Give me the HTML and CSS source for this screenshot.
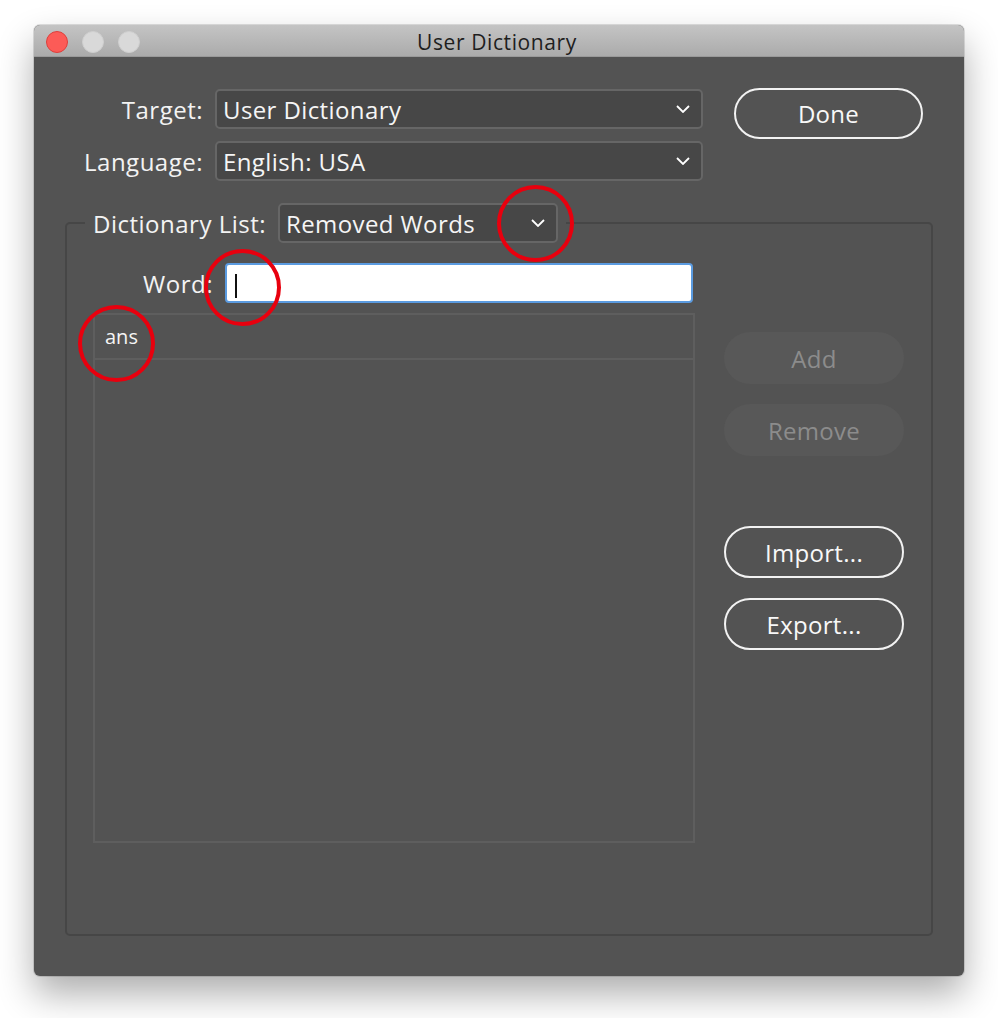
FILE: index.html
```html
<!DOCTYPE html>
<html lang="en">
<head>
<meta charset="utf-8">
<title>User Dictionary</title>
<link rel="stylesheet" href="styles.css">
</head>
<body>
<div class="window">
  <div class="titlebar">
    <div class="lights">
      <span class="light red"></span>
      <span class="light gray"></span>
      <span class="light gray"></span>
    </div>
    <div class="title">User Dictionary</div>
    <div></div>
  </div>
  <div class="content">
    <div class="top">
      <div class="fields">
        <div class="field">
          <span class="lbl lbl-top">Target:</span>
          <div class="select select-wide">
            <span class="select-text">User Dictionary</span>
            <svg class="chev" width="14" height="8" viewBox="0 0 14 8"><polyline points="1,1 7,7 13,1" fill="none" stroke="#fff" stroke-width="1.8"/></svg>
          </div>
        </div>
        <div class="field">
          <span class="lbl lbl-top">Language:</span>
          <div class="select select-wide">
            <span class="select-text">English: USA</span>
            <svg class="chev" width="14" height="8" viewBox="0 0 14 8"><polyline points="1,1 7,7 13,1" fill="none" stroke="#fff" stroke-width="1.8"/></svg>
          </div>
        </div>
      </div>
      <button class="btn btn-outline btn-done">Done</button>
    </div>

    <fieldset class="group">
      <legend class="legend">
        <div class="legend-inner">
          <span class="lbl">Dictionary List:</span>
          <div class="select select-short">
            <span class="select-text">Removed Words</span>
            <svg class="chev" width="14" height="8" viewBox="0 0 14 8"><polyline points="1,1 7,7 13,1" fill="none" stroke="#fff" stroke-width="1.8"/></svg>
          </div>
        </div>
      </legend>
      <div class="group-inner">
        <div class="left">
          <div class="word-row">
            <span class="lbl">Word:</span>
            <div class="input"><span class="caret"></span></div>
          </div>
          <div class="list">
            <div class="list-row">ans</div>
          </div>
        </div>
        <div class="actions">
          <button class="btn btn-disabled" disabled>Add</button>
          <button class="btn btn-disabled" disabled>Remove</button>
          <button class="btn btn-outline btn-import">Import...</button>
          <button class="btn btn-outline">Export...</button>
        </div>
      </div>
    </fieldset>
  </div>

  <div class="mark mark-chev"></div>
  <div class="mark mark-word"></div>
  <div class="mark mark-ans"></div>
</div>
</body>
</html>
```

FILE: styles.css
```css
* { box-sizing: border-box; }

html, body {
  margin: 0;
  padding: 0;
  background: #ffffff;
}

body {
  font-family: "Open Sans", "Noto Sans", sans-serif;
  padding: 25px 0 0 34px;
  min-height: 1018px;
}

.window {
  position: relative;
  width: 930px;
  height: 951px;
  background: #535353;
  border-radius: 6px;
  box-shadow: 0 18px 36px rgba(0, 0, 0, 0.32), 0 0 0 1px rgba(0, 0, 0, 0.12);
}

.titlebar {
  height: 32px;
  display: grid;
  grid-template-columns: 1fr auto 1fr;
  align-items: center;
  background: linear-gradient(#c4c4c4, #ababab);
  border-bottom: 1px solid #9a9a9a;
  border-radius: 6px 6px 0 0;
}

.lights {
  display: flex;
  align-items: center;
  gap: 14px;
  padding-left: 12px;
  padding-top: 2px;
}

.light {
  width: 22px;
  height: 22px;
  border-radius: 50%;
  display: block;
}

.light.red {
  background: #fc5b57;
  border: 1px solid #de3f3b;
}

.light.gray {
  background: #d9d9d9;
  border: 1px solid #cfcfcf;
}

.title {
  font-size: 21px;
  letter-spacing: 0.6px;
  color: #1e1e1e;
  line-height: 1;
  margin-left: -4px;
  padding-top: 3px;
}

.content {
  padding-top: 32px;
}

.top {
  display: flex;
  align-items: flex-start;
}

.fields {
  display: flex;
  flex-direction: column;
  gap: 12px;
}

.field {
  display: flex;
  align-items: center;
}

.lbl {
  font-size: 24px;
  font-weight: 500;
  letter-spacing: 0.5px;
  color: #f3f3f3;
  white-space: nowrap;
}

.lbl-top {
  width: 169px;
  text-align: right;
  margin-right: 12px;
}

.select {
  height: 40px;
  display: flex;
  align-items: center;
  justify-content: space-between;
  background: #474747;
  border: 2px solid #666666;
  border-radius: 5px;
  padding: 0 11px 0 6px;
}

.select-wide { width: 488px; }
.select-short { width: 280px; }

.select-text {
  font-size: 24px;
  font-weight: 500;
  letter-spacing: 0.4px;
  color: #f5f5f5;
  white-space: nowrap;
}

.chev { display: block; }

.btn {
  font-family: "Open Sans", "Noto Sans", sans-serif;
  font-size: 24px;
  font-weight: 500;
  letter-spacing: 0.3px;
  height: 52px;
  width: 180px;
  border-radius: 26px;
  padding: 0;
  cursor: default;
}

.btn-outline {
  background: transparent;
  border: 2px solid #f2f2f2;
  color: #f8f8f8;
}

.btn-disabled {
  background: #585858;
  border: none;
  color: #8c8c8c;
}

.btn-done {
  width: 189px;
  height: 51px;
  margin-left: 31px;
  margin-top: -1px;
}

.group {
  margin: 22px 31px 0 31px;
  height: 733px;
  border: 2px solid #464646;
  border-radius: 5px;
  padding: 0;
  min-width: 0;
}

.legend {
  margin-left: 18px;
  padding: 0 8px;
}

.legend-inner {
  display: flex;
  align-items: center;
  gap: 12px;
}

.group-inner {
  display: flex;
  padding: 20px 0 0 26px;
}

.left {
  width: 602px;
  display: flex;
  flex-direction: column;
}

.word-row {
  display: flex;
  align-items: center;
  justify-content: flex-end;
  padding-right: 2px;
  gap: 12px;
}

.input {
  width: 468px;
  height: 40px;
  background: #ffffff;
  border: 2px solid #5b9be0;
  border-radius: 4px;
  padding: 9px 0 0 8px;
}

.caret {
  display: block;
  width: 2px;
  height: 24px;
  background: #111;
}

.list {
  margin-top: 10px;
  height: 530px;
  border: 2px solid #5e5e5e;
}

.list-row {
  height: 45px;
  border-bottom: 2px solid #5e5e5e;
  font-size: 20px;
  font-weight: 500;
  color: #f5f5f5;
  padding-left: 10px;
  display: flex;
  align-items: center;
}

.actions {
  margin-left: 29px;
  padding-top: 69px;
  display: flex;
  flex-direction: column;
  gap: 20px;
}

.btn-import {
  margin-top: 50px;
}

.mark {
  position: absolute;
  width: 77px;
  height: 77px;
  border: 4px solid #e8000e;
  border-radius: 50%;
  pointer-events: none;
}

.mark-chev { left: 463px; top: 160px; }
.mark-word { left: 170px; top: 224px; }
.mark-ans  { left: 44px;  top: 280px; }
```
